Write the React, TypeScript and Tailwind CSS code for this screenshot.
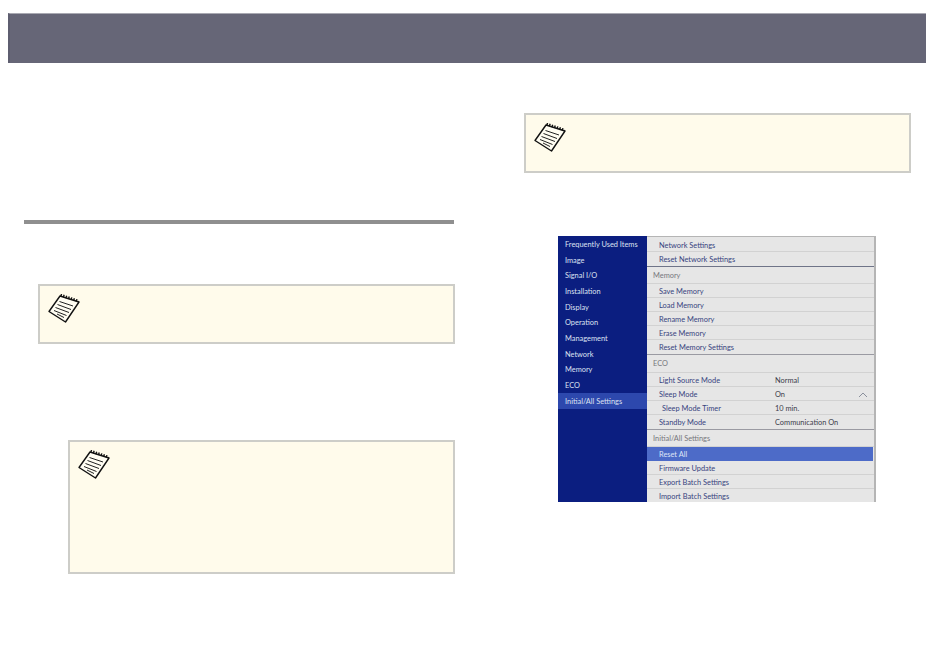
const menu = ["Frequently Used Items","Image","Signal I/O","Installation","Display","Operation","Management","Network","Memory","ECO","Initial/All Settings"];

function NoteIcon() {
  return (
    <svg width="33" height="30" viewBox="0 0 33 30" fill="none" className="block">
      <path d="M12 2 L31 8 L17.5 28 L1 17.5 Z" fill="#fffdf2" stroke="#111" strokeWidth="1.4" strokeLinejoin="round" />
      <path d="M12 2 L30 8" stroke="#111" strokeWidth="2.6" strokeDasharray="1.4 1.3" transform="translate(0.5 -1)" />
      <path d="M11.5 7.5 L25 12 M9.5 10.5 L23 15.5 M7.5 13.5 L21 18.5 M6 16.5 L18.5 21.5 M9 20 L16 23.5" stroke="#222" strokeWidth="1" />
    </svg>
  );
}

function Note({ className }: { className: string }) {
  return (
    <div className={"border-2 border-[#cdcdc8] bg-[#fffbeb] pl-2 pt-2 " + className}>
      <NoteIcon />
    </div>
  );
}

function Row({ label, value, indent, last, chevron, active }: { label: string; value?: string; indent?: boolean; last?: boolean; chevron?: boolean; active?: boolean }) {
  return (
    <div className={"flex items-center h-[14px] " + (active ? "bg-[#4d6bc8] text-[#dfe5f7] mr-[1px] " : "text-[#37447e] ") + (last ? "pt-[1px]" : "pt-[2px] border-b border-[#d2d2d2]")}>
      <span className={"w-[128px] shrink-0 " + (indent ? "pl-[15px]" : "pl-[12px]")}>{label}</span>
      {value && <span className="text-[#3c3c4a]">{value}</span>}
      {chevron && (
        <svg width="10" height="6" viewBox="0 0 10 6" className="ml-auto mr-[6px]" fill="none">
          <path d="M1 5 L5 1 L9 5" stroke="#8a8f9c" strokeWidth="1" />
        </svg>
      )}
    </div>
  );
}

function Heading({ label, h }: { label: string; h: string }) {
  return (
    <div className={"flex items-center pl-[6px] pt-[1px] text-[#77777c] border-b border-[#d2d2d2] " + h}>{label}</div>
  );
}

export default function App() {
  return (
    <div className="w-[950px] h-[660px] bg-white pt-[13px] pl-[8px] overflow-hidden font-['Noto_Sans',sans-serif]">
      <div className="w-[918px] h-[50px] bg-[#666677] border-t border-[#a9a9b2] border-l-2 border-l-[#5e5e70]" />
      <div className="flex">
        <div className="ml-[16px] w-[430px] shrink-0">
          <div className="mt-[157px] h-[4px] bg-[#8f8f8f]" />
          <Note className="mt-[60px] ml-[14px] w-[417px] h-[60px]" />
          <Note className="mt-[96px] ml-[44px] w-[387px] h-[134px]" />
        </div>
        <div className="ml-[70px] w-[387px] shrink-0">
          <Note className="mt-[50px] h-[60px]" />
          <div className="mt-[63px] ml-[34px] w-[318px] h-[266px] flex text-[7.4px] leading-none overflow-hidden font-['Lato',sans-serif]">
            <div className="w-[89px] bg-[#0b1e80] text-[#dde2f2] shrink-0">
              {menu.map((m, i) => (
                <div key={m} className={"h-[15.7px] flex items-center pl-[7px] pt-[1.5px] " + (i === 10 ? "bg-[#2d48ad]" : "")}>{m}</div>
              ))}
            </div>
            <div className="flex-1 bg-[#e6e6e6] border-t border-[#b5b5b5] border-r-2 border-r-[#b5b5b5]">
              <div className="h-[1px]" />
              <Row label="Network Settings" />
              <Row label="Reset Network Settings" last />
              <div className="h-px bg-[#6f7488]" />
              <Heading label="Memory" h="h-[17px]" />
              <Row label="Save Memory" />
              <Row label="Load Memory" />
              <Row label="Rename Memory" />
              <Row label="Erase Memory" />
              <Row label="Reset Memory Settings" last />
              <div className="h-px bg-[#9a9aa2]" />
              <Heading label="ECO" h="h-[18px]" />
              <Row label="Light Source Mode" value="Normal" />
              <Row label="Sleep Mode" value="On" chevron />
              <Row label="Sleep Mode Timer" value="10 min." indent />
              <Row label="Standby Mode" value="Communication On" last />
              <div className="h-px bg-[#9a9aa2]" />
              <Heading label="Initial/All Settings" h="h-[17px]" />
              <Row label="Reset All" active last />
              <Row label="Firmware Update" />
              <Row label="Export Batch Settings" />
              <Row label="Import Batch Settings" last />
            </div>
          </div>
        </div>
      </div>
    </div>
  );
}
